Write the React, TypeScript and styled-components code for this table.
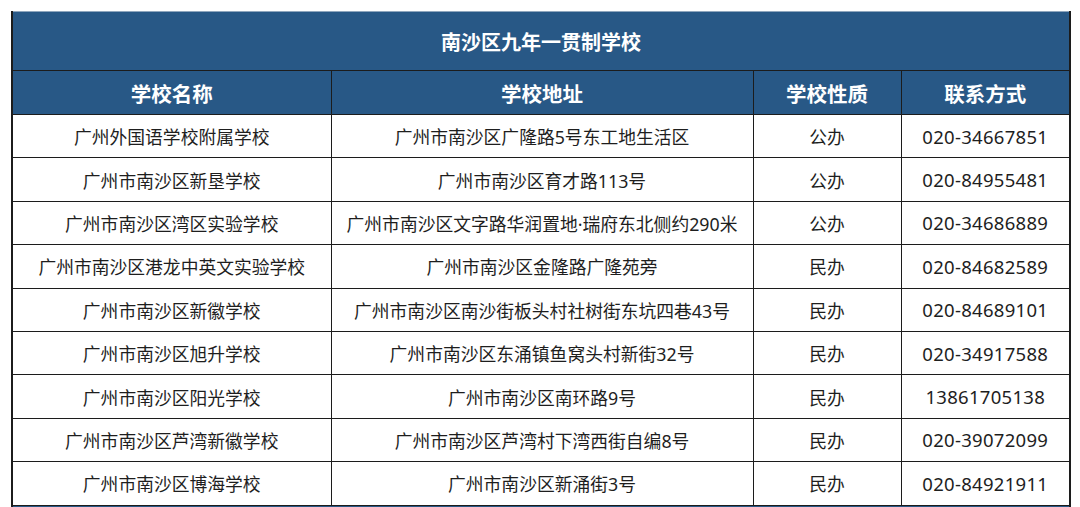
import styled, { createGlobalStyle } from 'styled-components';

const schools = [
  ['广州外国语学校附属学校', '广州市南沙区广隆路5号东工地生活区', '公办', '020-34667851'],
  ['广州市南沙区新垦学校', '广州市南沙区育才路113号', '公办', '020-84955481'],
  ['广州市南沙区湾区实验学校', '广州市南沙区文字路华润置地·瑞府东北侧约290米', '公办', '020-34686889'],
  ['广州市南沙区港龙中英文实验学校', '广州市南沙区金隆路广隆苑旁', '民办', '020-84682589'],
  ['广州市南沙区新徽学校', '广州市南沙区南沙街板头村社树街东坑四巷43号', '民办', '020-84689101'],
  ['广州市南沙区旭升学校', '广州市南沙区东涌镇鱼窝头村新街32号', '民办', '020-34917588'],
  ['广州市南沙区阳光学校', '广州市南沙区南环路9号', '民办', '13861705138'],
  ['广州市南沙区芦湾新徽学校', '广州市南沙区芦湾村下湾西街自编8号', '民办', '020-39072099'],
  ['广州市南沙区博海学校', '广州市南沙区新涌街3号', '民办', '020-84921911'],
];

const headers = ['学校名称', '学校地址', '学校性质', '联系方式'];
const widths = [319, 422, 148, 169];

const GlobalStyle = createGlobalStyle`
  html, body {
    margin: 0;
    padding: 0;
    background: #fff;
    overflow: hidden;
  }
  body {
    font-family: 'Noto Sans', 'Noto Sans CJK SC', sans-serif;
  }
`;

const App = () => {
  return (
    <Page>
      <GlobalStyle />
      <Table>
        <colgroup>
          {widths.map((w, idx) => (
            <col key={idx} style={{ width: w }} />
          ))}
        </colgroup>
        <thead>
          <tr>
            <Title colSpan={4}>南沙区九年一贯制学校</Title>
          </tr>
          <tr>
            {headers.map((h, idx) => (
              <Head key={idx}>{h}</Head>
            ))}
          </tr>
        </thead>
        <tbody>
          {schools.map((row, idx) => (
            <Row key={idx}>
              {row.map((cell, i) => (
                <Cell key={i} $num={i === 3}>
                  {cell}
                </Cell>
              ))}
            </Row>
          ))}
          <tr>
            <Strip colSpan={4} />
          </tr>
        </tbody>
      </Table>
    </Page>
  );
};

const Page = styled.div`
  padding: 11px 0 0 11px;
  width: 1080px;
  height: 507px;
  box-sizing: border-box;
  overflow: hidden;
`;

const Table = styled.table`
  width: 1059px;
  table-layout: fixed;
  border-collapse: collapse;
  border-left: 2px solid #1c1c1c;
  border-right: 2px solid #1c1c1c;
`;

const Title = styled.th`
  height: 58px;
  padding: 0;
  background: #285886;
  border-top: 1px solid #8fa6bd;
  border-bottom: 1px solid #1c1c1c;
  color: #fff;
  font-family: 'Noto Sans CJK SC', sans-serif;
  font-size: 20px;
  font-weight: 700;
  text-align: center;
  vertical-align: middle;
`;

const Head = styled.th`
  height: 43px;
  padding: 0;
  background: #285886;
  border: 1px solid #1c1c1c;
  color: #fff;
  font-family: 'Noto Sans CJK SC', sans-serif;
  font-size: 20.5px;
  font-weight: 700;
  text-align: center;
  vertical-align: middle;
`;

const Row = styled.tr`
  height: 43.4px;
`;

const Cell = styled.td<{ $num?: boolean }>`
  padding: 0;
  border: 1px solid #1c1c1c;
  color: #1e1e1e;
  font-family: 'Noto Sans', 'Noto Sans CJK SC', sans-serif;
  font-size: ${({ $num }) => ($num ? '18.5px' : '17.8px')};
  text-align: center;
  vertical-align: middle;
  white-space: nowrap;
  letter-spacing: ${({ $num }) => ($num ? '0.3px' : '0')};
`;

const Strip = styled.td`
  height: 12px;
  padding: 0;
  background: #285886;
  border-top: 1px solid #1c1c1c;
`;

export default App;
